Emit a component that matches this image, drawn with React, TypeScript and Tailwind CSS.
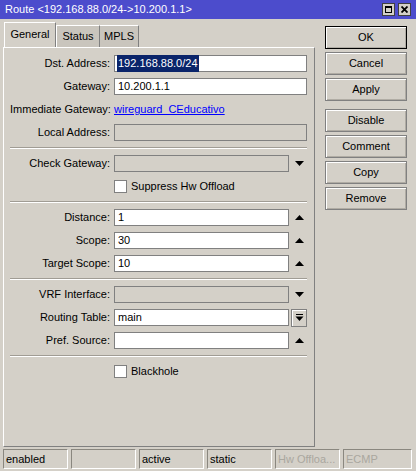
import React from "react";

const UpArrow = () => (
  <svg width="9" height="5" viewBox="0 0 9 5">
    <path d="M0 5 L4.5 0 L9 5 Z" fill="#000" />
  </svg>
);

const DownArrow = () => (
  <svg width="9" height="5" viewBox="0 0 9 5">
    <path d="M0 0 L9 0 L4.5 5 Z" fill="#000" />
  </svg>
);

const Row = ({ label, children }: { label: string; children?: React.ReactNode }) => (
  <div className="flex h-[17px] items-center">
    <div className="w-[100px] shrink-0 text-right whitespace-nowrap">{label}</div>
    <div className="ml-[4px] flex flex-1 items-center h-full">{children}</div>
  </div>
);

const Field = ({ value, disabled }: { value?: React.ReactNode; disabled?: boolean }) => (
  <div
    className={`flex h-[17px] flex-1 items-center border border-[#808080] pl-[2px] whitespace-nowrap ${
      disabled ? "bg-[#d4d0c8]" : "bg-white"
    }`}
  >
    {value}
  </div>
);

const Arrow = ({ down }: { down?: boolean }) => (
  <div className="flex h-full w-[18px] items-center justify-end pr-[3px]">
    {down ? <DownArrow /> : <UpArrow />}
  </div>
);

const Separator = () => (
  <div className="h-[2px] border-t border-[#a09c94] border-b border-b-white" />
);

const Check = ({ label }: { label: string }) => (
  <div className="flex h-[17px] items-center pl-[104px]">
    <div className="h-[13px] w-[13px] border border-[#808080] bg-white" />
    <span className="ml-[4px]">{label}</span>
  </div>
);

const Button = ({ label, primary }: { label: string; primary?: boolean }) => (
  <div
    className={`flex h-[23px] w-[82px] items-center justify-center border ${
      primary ? "border-black" : "border-[#808080]"
    } shadow-[inset_1px_1px_0_#ffffff,inset_-1px_-1px_0_#b0aca4]`}
  >
    {label}
  </div>
);

const StatusCell = ({ text, dim, wide }: { text?: string; dim?: boolean; wide?: boolean }) => (
  <div
    className={`flex h-[20px] ${wide ? "w-[69px]" : "w-[65px]"} items-center overflow-hidden whitespace-nowrap border border-[#8a877f] border-r-white border-b-white pl-[2px] ${
      dim ? "text-[#aaa79f]" : "text-black"
    }`}
  >
    {text}
  </div>
);

export default function App() {
  return (
    <div className="flex h-[471px] w-[416px] flex-col bg-[#d4d0c8] font-['Liberation_Sans',Arial,sans-serif] text-[11px] text-black">
      {/* Title bar */}
      <div className="flex h-[19px] items-center bg-[#4c4ccc] pl-[5px] pr-[5px] text-white">
        <span className="flex-1 whitespace-nowrap">Route &lt;192.168.88.0/24-&gt;10.200.1.1&gt;</span>
        <div className="flex gap-[3px]">
          <div className="flex h-[13px] w-[13px] items-center justify-center border border-[#404040] bg-[#d4d0c8]">
            <div className="h-[7px] w-[7px] border border-black border-t-2" />
          </div>
          <div className="flex h-[13px] w-[13px] items-center justify-center border border-[#404040] bg-[#d4d0c8]">
            <svg width="7" height="7" viewBox="0 0 7 7">
              <path d="M0.5 0.5 L6.5 6.5 M6.5 0.5 L0.5 6.5" stroke="#000" strokeWidth="1.8" />
            </svg>
          </div>
        </div>
      </div>

      {/* Body */}
      <div className="flex pl-[3px] pt-[3px]">
        <div className="flex w-[312px] flex-col">
          {/* Tabs */}
          <div className="ml-[1px] flex h-[25px] items-end">
            <div className="flex h-[25px] w-[52px] items-center justify-center border-l border-t border-r border-white border-r-[#808080] bg-[#d4d0c8] pb-[2px]">
              General
            </div>
            <div className="flex h-[22px] w-[44px] items-center justify-center border-l border-t border-r border-white border-r-[#808080] bg-[#c9c5bd]">
              Status
            </div>
            <div className="flex h-[22px] w-[39px] items-center justify-center border-t border-r border-white border-r-[#808080] bg-[#c9c5bd]">
              MPLS
            </div>
          </div>

          {/* Panel */}
          <div className="flex h-[400px] flex-col gap-[6px] border border-white border-r-[#808080] border-b-[#808080] pl-[6px] pr-[7px] pt-[7px]">
            <Row label="Dst. Address:">
              <Field
                value={<span className="bg-[#0a246a] px-[1px] text-white">192.168.88.0/24</span>}
              />
            </Row>
            <Row label="Gateway:">
              <Field value={<span className="pl-[1px]">10.200.1.1</span>} />
            </Row>
            <Row label="Immediate Gateway:">
              <span className="text-[#0000ff] underline">wireguard_CEducativo</span>
            </Row>
            <Row label="Local Address:">
              <Field disabled />
            </Row>
            <Separator />
            <Row label="Check Gateway:">
              <Field disabled />
              <Arrow down />
            </Row>
            <Check label="Suppress Hw Offload" />
            <Separator />
            <Row label="Distance:">
              <Field value={<span className="pl-[1px]">1</span>} />
              <Arrow />
            </Row>
            <Row label="Scope:">
              <Field value={<span className="pl-[1px]">30</span>} />
              <Arrow />
            </Row>
            <Row label="Target Scope:">
              <Field value={<span className="pl-[1px]">10</span>} />
              <Arrow />
            </Row>
            <Separator />
            <Row label="VRF Interface:">
              <Field disabled />
              <Arrow down />
            </Row>
            <Row label="Routing Table:">
              <Field value={<span className="pl-[1px]">main</span>} />
              <div className="ml-[2px] flex h-[18px] w-[16px] items-center justify-center border border-[#808080] shadow-[inset_1px_1px_0_#ffffff]">
                <svg width="9" height="8" viewBox="0 0 9 8">
                  <rect x="1" y="0" width="7" height="1" fill="#000" />
                  <path d="M0.5 2.5 L8.5 2.5 L4.5 7 Z" fill="#000" />
                </svg>
              </div>
            </Row>
            <Row label="Pref. Source:">
              <Field />
              <Arrow />
            </Row>
            <Separator />
            <Check label="Blackhole" />
          </div>
        </div>

        {/* Buttons */}
        <div className="ml-[10px] mt-[4px] flex flex-col gap-[3px]">
          <Button label="OK" primary />
          <Button label="Cancel" />
          <Button label="Apply" />
          <div className="mt-[5px]">
            <Button label="Disable" />
          </div>
          <Button label="Comment" />
          <Button label="Copy" />
          <Button label="Remove" />
        </div>
      </div>

      {/* Status bar */}
      <div className="mt-[2px] flex gap-[3px] pl-[3px]">
        <StatusCell text="enabled" />
        <StatusCell />
        <StatusCell text="active" />
        <StatusCell text="static" />
        <StatusCell text="Hw Offloa..." dim />
        <StatusCell text="ECMP" dim wide />
      </div>
    </div>
  );
}
